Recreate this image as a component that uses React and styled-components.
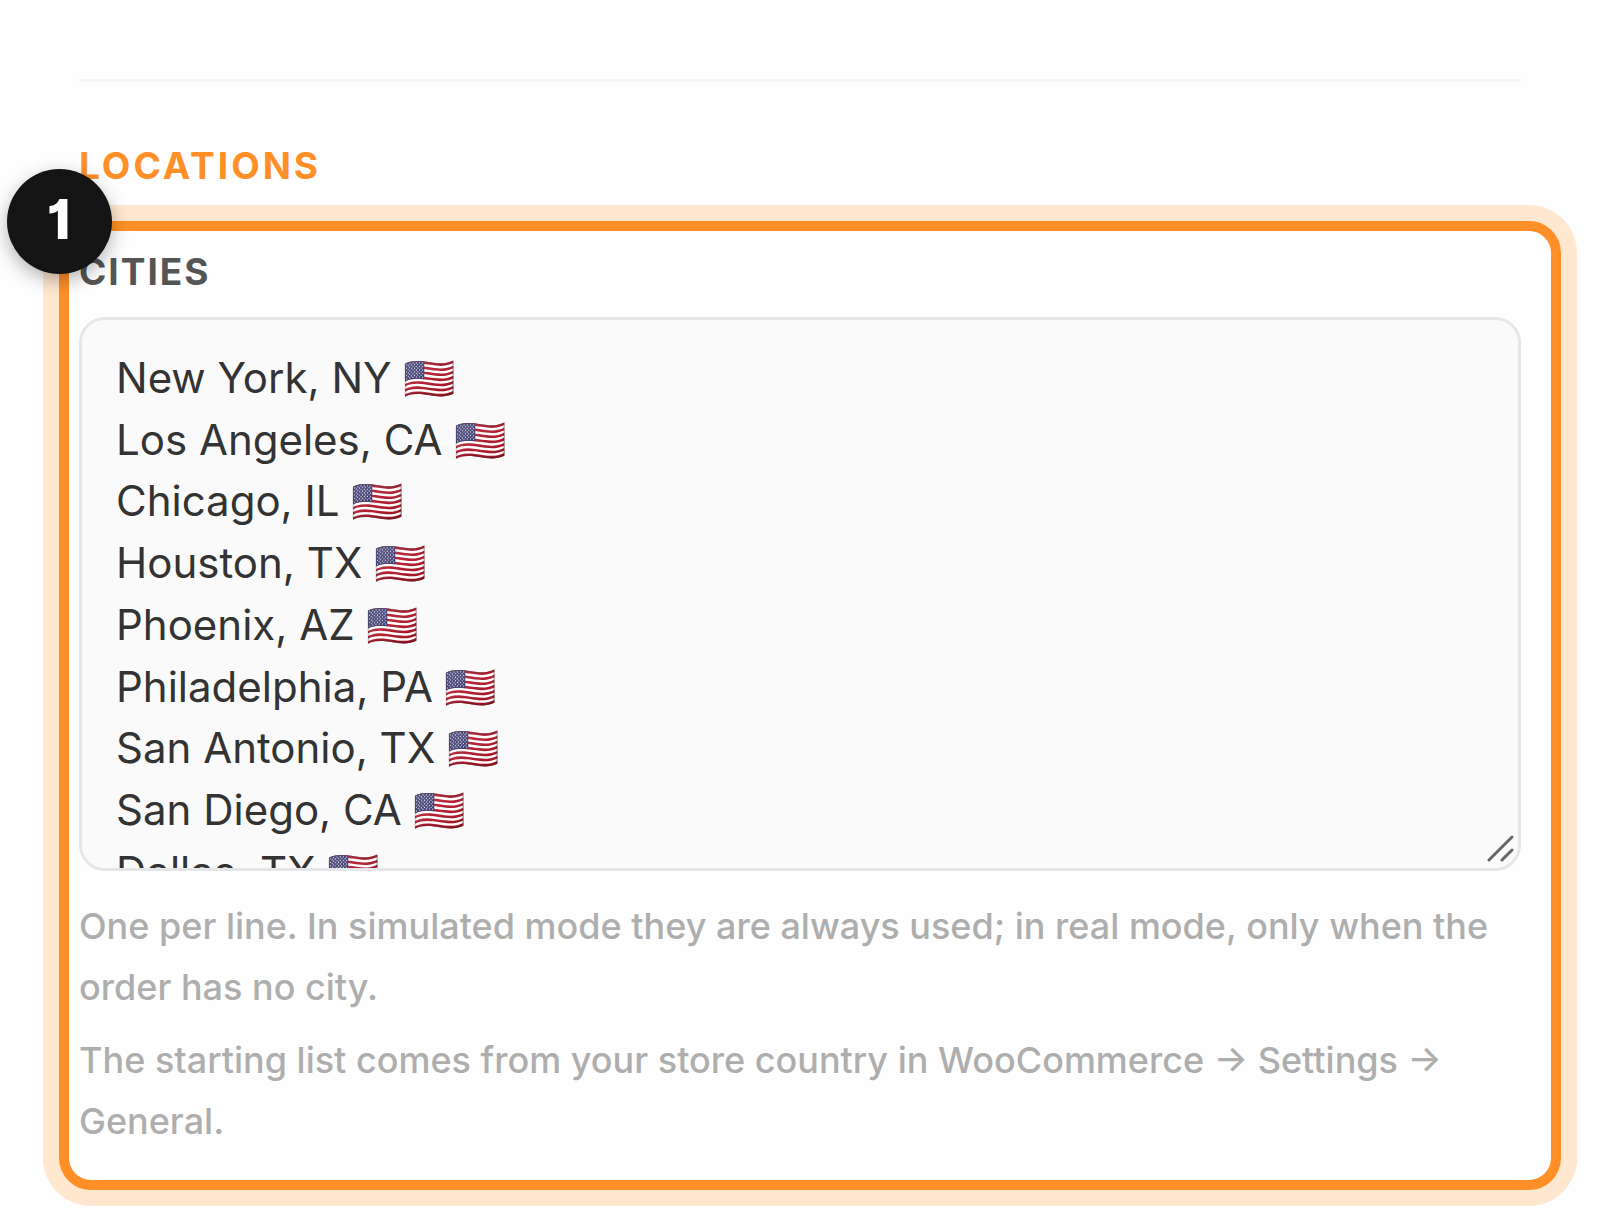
import React from 'react';
import styled, { createGlobalStyle } from 'styled-components';

const palette = {
  orange: '#ff8f26',
  halo: '#ffe7d0',
  ink: '#141414',
  label: '#555555',
  text: '#333333',
  help: '#aeaeae',
  line: '#f6f6f7',
  fieldLine: '#e5e6ea',
  field: '#fafafa',
};

const GlobalStyle = createGlobalStyle`
  * {
    box-sizing: border-box;
  }

  body {
    margin: 0;
    background: #fefefe;
    font-family: Inter, 'Noto Color Emoji', sans-serif;
  }
`;

const Page = styled.main`
  padding: 79px 79px 36px;
`;

const Divider = styled.hr`
  height: 3px;
  margin: 0 0 62px;
  border: 0;
  background: ${palette.line};
`;

const SectionTitle = styled.h2`
  margin: 0 0 33px;
  font-size: 37px;
  line-height: 44px;
  font-weight: 700;
  letter-spacing: 3px;
  text-transform: uppercase;
  color: ${palette.orange};
`;

const Highlight = styled.section`
  position: relative;
  margin: 0 -40px 0 -20px;
  padding: 19px 30px 28px 10px;
  border: 10px solid ${palette.orange};
  border-radius: 32px;
  box-shadow: 0 0 0 16px ${palette.halo};
`;

const StepBadge = styled.span`
  position: absolute;
  top: -62px;
  left: -62px;
  display: flex;
  align-items: center;
  justify-content: center;
  width: 105px;
  height: 105px;
  padding: 0 2px 6px 0;
  border-radius: 50%;
  background: ${palette.ink};
  box-shadow: 0 6px 18px rgba(0, 0, 0, 0.3);
  color: #fff;
  font-size: 55px;
  font-weight: 800;
  font-feature-settings: 'cv01';
`;

const FieldLabel = styled.label`
  display: block;
  margin-bottom: 23px;
  font-size: 37px;
  line-height: 44px;
  font-weight: 700;
  letter-spacing: 2px;
  text-transform: uppercase;
  color: ${palette.label};
`;

const FieldBox = styled.div`
  position: relative;
  margin-bottom: 25px;
`;

const TextArea = styled.textarea`
  display: block;
  width: 100%;
  margin: 0;
  padding: 27px 34px;
  border: 3px solid ${palette.fieldLine};
  border-radius: 26px;
  outline: none;
  background: ${palette.field};
  color: ${palette.text};
  font-family: inherit;
  font-size: 42px;
  line-height: 1.47;
  resize: vertical;
  scrollbar-width: none;

  &::-webkit-resizer {
    display: none;
  }
`;

const Grip = styled.svg`
  position: absolute;
  right: 6px;
  bottom: 8px;
  width: 28px;
  height: 28px;
  pointer-events: none;
`;

const Help = styled.p`
  margin: 0;
  font-size: 36px;
  line-height: 61px;
  font-weight: 500;
  color: ${palette.help};

  & + & {
    margin-top: 12px;
  }
`;

const cities = [
  'New York, NY',
  'Los Angeles, CA',
  'Chicago, IL',
  'Houston, TX',
  'Phoenix, AZ',
  'Philadelphia, PA',
  'San Antonio, TX',
  'San Diego, CA',
  'Dallas, TX',
];

const App = () => {
  const value = cities.map((city) => `${city} 🇺🇸`).join('\n');

  return (
    <Page>
      <GlobalStyle />
      <Divider />
      <SectionTitle>Locations</SectionTitle>
      <Highlight>
        <FieldLabel htmlFor="cities">Cities</FieldLabel>
        <FieldBox>
          <TextArea id="cities" rows={8} defaultValue={value} spellCheck={false} />
          <Grip viewBox="0 0 28 28" aria-hidden="true">
            <path
              d="M2 25 25 2M15 25 25 15"
              stroke="#666"
              strokeWidth="3"
              strokeLinecap="round"
              fill="none"
            />
          </Grip>
        </FieldBox>
        <Help>
          One per line. In simulated mode they are always used; in real mode, only when the order
          has no city.
        </Help>
        <Help>
          The starting list comes from your store country in WooCommerce → Settings → General.
        </Help>
        <StepBadge>1</StepBadge>
      </Highlight>
    </Page>
  );
};

export default App;
